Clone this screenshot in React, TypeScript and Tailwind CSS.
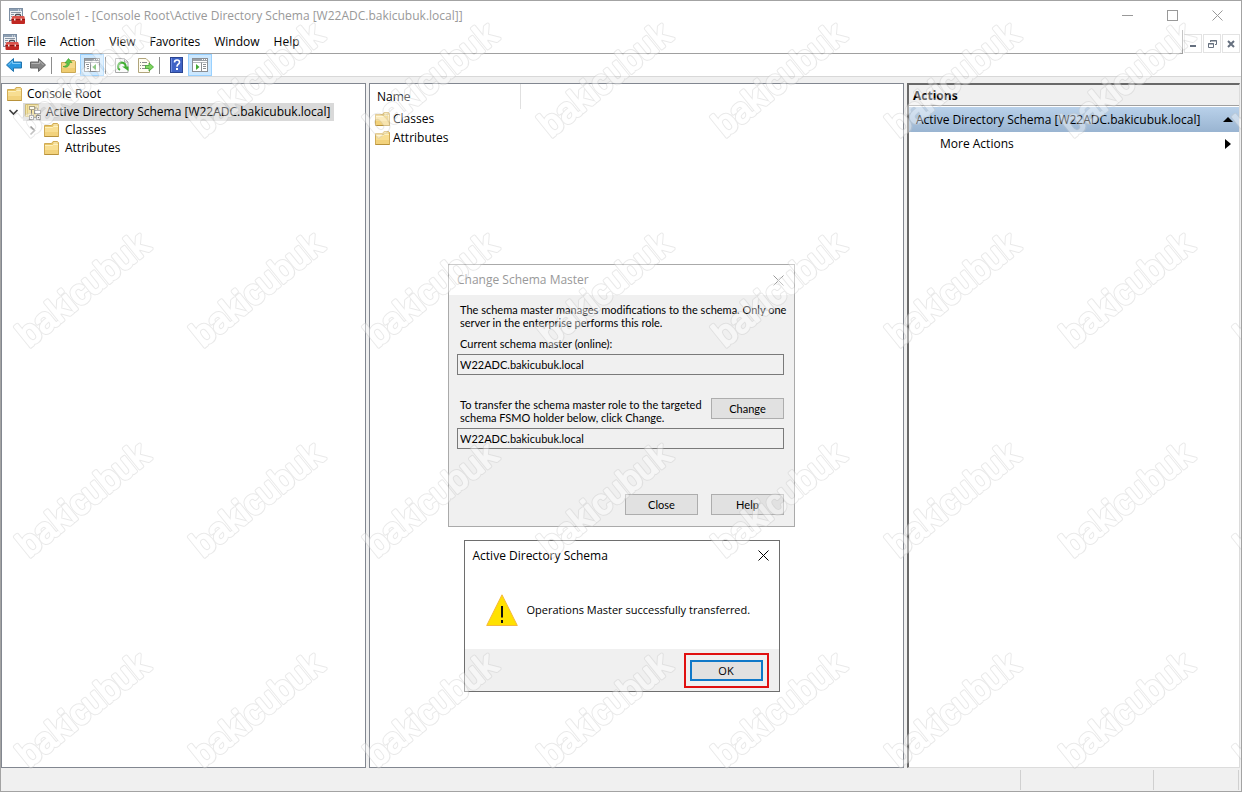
import { useState, type ReactNode } from "react";
import { clsx } from "clsx";

const SERVER = "W22ADC.bakicubuk.local";
const UI_FONT = "font-['Open_Sans','Noto_Sans',sans-serif]";
const DIALOG_FONT = "font-[Lato,'Liberation_Sans',sans-serif]";

const menus = ["File", "Action", "View", "Favorites", "Window", "Help"];
const schemaItems = ["Classes", "Attributes"];

function ConsoleIcon() {
  return (
    <svg width="16" height="16" viewBox="0 0 16 16" className="shrink-0" aria-hidden="true">
      <rect x="0.5" y="0.5" width="13" height="12" fill="#eef1f4" stroke="#7d8fa3" />
      <rect x="1" y="1" width="12" height="2" fill="#8ea0b4" />
      <path d="M9 2h1M11 2h1" stroke="#fff" />
      <path d="M2 4.500h10M2 6.500h3M2 8.500h1" stroke="#8794a3" />
      <path d="M6.500 9V7.500q0-1 1-1h3q1 0 1 1V9" fill="none" stroke="#4d4d55" strokeWidth="1.300" />
      <path d="M3 9q0-1 1-1h10.500q1 0 1 1l.5 2H2.500z" fill="#d9534c" />
      <path d="M2.500 11H16v4q0 1-1 1H3.500q-1 0-1-1z" fill="#c02823" />
      <path d="M2.500 11.500H16" stroke="#8e1512" />
      <path d="M5 10.500h1.500v2H5zM11.500 10.500H13v2h-1.500z" fill="#f4e9e4" />
    </svg>
  );
}

function FolderIcon() {
  return (
    <svg width="15" height="14" viewBox="0 0 15 14" className="shrink-0" aria-hidden="true">
      <path d="M.5 2.500h7l1.500-2h4.500l1 1v12H.5z" fill="#e9c667" stroke="#d0ab55" />
      <path d="M9.500 1.500h4v1h-4z" fill="#fff8dc" />
      <path d="M1 4h7.500l1-1H14v10H1z" fill="#f8de92" />
      <path d="M1 9h13v4H1z" fill="#f2d27c" />
      <path d="M1 4.500h7.500l1-1H14" fill="none" stroke="#fdf0be" />
      <path d="M.5 13.500h14" stroke="#b8923b" />
    </svg>
  );
}

function SchemaIcon() {
  return (
    <svg width="17" height="16" viewBox="0 0 17 16" className="shrink-0" aria-hidden="true">
      <path d="M.5.5H13.500v12H.5z" fill="#f3e3a6" stroke="#cdbb78" />
      <path d="M2.500 1v11" stroke="#e2cd80" />
      <rect x="4.500" y="2.500" width="5" height="3" fill="#fdfbf0" stroke="#a8a088" />
      <path d="M10 4h2.500v3M6.500 6v5M12.500 9v2" fill="none" stroke="#85817a" />
      <rect x="9.500" y="6.500" width="6" height="3" fill="#fff" stroke="#8c8c8c" />
      <rect x="4.500" y="11.500" width="4" height="4" fill="#f4f4f4" stroke="#7e7e7e" />
      <rect x="11.500" y="11.500" width="4" height="4" fill="#f4f4f4" stroke="#7e7e7e" />
      <path d="M6 13.500h1M13 13.500h1M9 13.500h2" stroke="#777" />
    </svg>
  );
}

function ArrowIcon({ forward = false }: { forward?: boolean }) {
  return (
    <svg width="16" height="14" viewBox="0 0 16 14" aria-hidden="true">
      {forward ? (
        <>
          <path d="M15.500 7 8.500.5V4h-8v6h8v3.500z" fill="#858585" stroke="#666" strokeLinejoin="round" />
          <path d="M1.500 5.500h8V3L13.500 7" fill="none" stroke="#b5b5b5" />
        </>
      ) : (
        <>
          <path d="M.5 7 7.500.5V4h8v6h-8v3.500z" fill="#2c9be3" stroke="#2274ad" strokeLinejoin="round" />
          <path d="M14.500 5.500h-8V3L2.500 7" fill="none" stroke="#84cdf8" />
        </>
      )}
    </svg>
  );
}

function UpFolderIcon() {
  return (
    <svg width="15" height="15" viewBox="0 0 15 15" aria-hidden="true">
      <path d="M.5 4.500h7l1.500-2h4.500l1 1v11H.5z" fill="#f5d98b" stroke="#cba955" />
      <path d="M1 10h13v4H1z" fill="#efcc70" />
      <path d="M2 8.500C5 8.500 6 7 6 5H4L7.500.5 11 4.500H8.500C8.500 8 6 10.500 2 8.500z" fill="#5cc348" stroke="#37982a" strokeWidth=".6" />
    </svg>
  );
}

function PaneIcon({ side }: { side: "left" | "right" }) {
  return (
    <svg width="16" height="14" viewBox="0 0 16 14" aria-hidden="true">
      <rect x="0.5" y="0.5" width="15" height="13" fill="#fff" stroke="#8b8f94" />
      <path d="M1 2h14" stroke="#9a9fa5" strokeWidth="2" />
      <path d="M10 1.500h1M12 1.500h1M14 1.500h1" stroke="#fff" />
      <path d="M1 4.500h14" stroke="#b4b8bc" />
      {side === "left" ? (
        <>
          <path d="M6.500 4.500V13" stroke="#8b8f94" />
          <path d="M2 6.500h3M3 8.500h2M3 10.500h2" stroke="#8b8f94" />
          <path d="M12 6v6L8.500 9z" fill="#42a832" />
        </>
      ) : (
        <>
          <path d="M9.500 4.500V13" stroke="#8b8f94" />
          <path d="M11 6.500h3M11 8.500h3M11 10.500h3" stroke="#8b8f94" />
          <path d="M4 6v6l3.500-3z" fill="#42a832" />
        </>
      )}
    </svg>
  );
}

function RefreshIcon() {
  return (
    <svg width="14" height="15" viewBox="0 0 14 15" aria-hidden="true">
      <path d="M.5.5h9l3.500 3.500v10.500H.5z" fill="#fbfbfb" stroke="#a9a9a9" />
      <path d="M9.500.5V4H13" fill="none" stroke="#a9a9a9" />
      <path d="M5 11.800A3.800 3.800 0 1 1 10.600 9" fill="none" stroke="#3fae30" strokeWidth="2" />
      <path d="M7 8.500h6.500V13z" fill="#3fae30" />
    </svg>
  );
}

function ExportIcon() {
  return (
    <svg width="16" height="15" viewBox="0 0 16 15" aria-hidden="true">
      <path d="M.5.5H8L11.500 4v10.500H.5z" fill="#fffdf0" stroke="#b1a57c" />
      <path d="M2 4.500h1M4 4.500h5M2 7.500h1M4 7.500h4M2 10.500h1M4 10.500h4" stroke="#8b8b8b" />
      <path d="M7.500 7.500H11V5l4.500 4L11 13v-2.500H7.500z" fill="#7fd45f" stroke="#3a9e2c" strokeWidth=".8" />
    </svg>
  );
}

function HelpIcon() {
  return (
    <svg width="13" height="16" viewBox="0 0 13 16" aria-hidden="true">
      <rect x="0.5" y="0.5" width="12" height="15" fill="#3f63c6" stroke="#2b4591" />
      <path d="M1.500 1v14" stroke="#6f8ee2" />
      <path d="M4.500 5.500Q4.500 3 7 3t2.500 2.200Q9.500 6.500 8 7.500 7 8.200 7 9.700" fill="none" stroke="#fff" strokeWidth="1.600" />
      <rect x="6" y="11" width="2" height="2" fill="#fff" />
    </svg>
  );
}

function CloseGlyph() {
  return (
    <svg width="11" height="11" viewBox="0 0 11 11" aria-hidden="true">
      <path d="M.5.5l10 10M10.500.5l-10 10" stroke="currentColor" fill="none" />
    </svg>
  );
}

function ToolButton({ label, active = false, children }: { label: string; active?: boolean; children: ReactNode }) {
  return (
    <button
      aria-label={label}
      aria-pressed={active}
      className={clsx(
        "flex h-[22px] w-6 items-center justify-center border",
        active ? "border-[#99d1ff] bg-[#cce8ff]" : "border-transparent hover:bg-[#e5f3ff]"
      )}
    >
      {children}
    </button>
  );
}

function ToolSeparator() {
  return (
    <div className="flex h-[17px] w-[6px] justify-start">
      <div className="ml-px w-px bg-[#8d8d8d]" />
    </div>
  );
}

function TitleBar() {
  return (
    <header className="flex h-[29px] items-center pl-2 pr-px text-[#999]">
      <ConsoleIcon />
      <h1 className="ml-[5px] flex-1 truncate">Console1 - [Console Root\Active Directory Schema [{SERVER}]]</h1>
      <button aria-label="Minimize" className="flex h-full w-[45px] items-center justify-center">
        <svg width="11" height="11" aria-hidden="true"><path d="M0 5.500h11" stroke="currentColor" /></svg>
      </button>
      <button aria-label="Maximize" className="flex h-full w-[45px] items-center justify-center">
        <svg width="11" height="11" aria-hidden="true"><rect x="0.5" y="0.5" width="10" height="10" fill="none" stroke="currentColor" /></svg>
      </button>
      <button aria-label="Close" className="flex h-full w-[45px] items-center justify-center">
        <CloseGlyph />
      </button>
    </header>
  );
}

function MenuBar() {
  return (
    <div className="flex h-6 items-stretch">
      <nav className="flex flex-1 items-center border-b border-[#a0a0a0] pl-[2px]">
        <ConsoleIcon />
        <div className="ml-px flex">
          {menus.map((menu) => (
            <button key={menu} className="px-[7px] hover:bg-[#e5f3ff]">{menu}</button>
          ))}
        </div>
      </nav>
      <div className="flex items-end gap-px border-l border-[#a0a0a0] pb-px pl-px pr-px text-[#66707f]">
        <button aria-label="Minimize child window" className="flex h-[19px] w-[18px] items-center justify-center border border-[#e3e3e3]">
          <svg width="9" height="9" aria-hidden="true"><path d="M1 7h6" stroke="currentColor" strokeWidth="2" /></svg>
        </button>
        <button aria-label="Restore child window" className="flex h-[19px] w-[18px] items-center justify-center border border-[#e3e3e3]">
          <svg width="9" height="8" aria-hidden="true">
            <path d="M2.500 2V.5h6v4H7M2 1h7M.5 3.500h5v4h-5zM0 4h6" fill="none" stroke="currentColor" />
          </svg>
        </button>
        <button aria-label="Close child window" className="flex h-[19px] w-[18px] items-center justify-center border border-[#e3e3e3]">
          <svg width="8" height="8" aria-hidden="true"><path d="M1 1l6 6M7 1l-6 6" stroke="currentColor" strokeWidth="2" /></svg>
        </button>
      </div>
    </div>
  );
}

function ToolBar() {
  return (
    <div className="flex h-[23px] items-center border-b border-[#d8d8d8] pl-px" role="toolbar">
      <ToolButton label="Back"><ArrowIcon /></ToolButton>
      <ToolButton label="Forward"><ArrowIcon forward /></ToolButton>
      <ToolSeparator />
      <ToolButton label="Up one level"><UpFolderIcon /></ToolButton>
      <ToolButton label="Show console tree" active><PaneIcon side="left" /></ToolButton>
      <ToolSeparator />
      <ToolButton label="Refresh"><RefreshIcon /></ToolButton>
      <ToolButton label="Export list"><ExportIcon /></ToolButton>
      <ToolSeparator />
      <ToolButton label="Help topics"><HelpIcon /></ToolButton>
      <ToolButton label="Show action pane" active><PaneIcon side="right" /></ToolButton>
    </div>
  );
}

function ConsoleTree() {
  const [open, setOpen] = useState(true);

  return (
    <aside className="w-[365px] border border-[#828790] bg-white pt-px">
      <ul className="leading-[18px]">
        <li className="flex h-[18px] items-center gap-[5px] pl-[5px]">
          <FolderIcon />
          Console Root
        </li>
        <li>
          <div className="flex h-[18px] items-center pl-[6px]">
            <button aria-label="Toggle schema" aria-expanded={open} className="w-[15px]" onClick={() => setOpen(!open)}>
              <svg width="11" height="7" aria-hidden="true" className={clsx(!open && "-rotate-90")}>
                <path d="M1.500 1l4 4 4-4" fill="none" stroke="#404040" strokeWidth="1.700" />
              </svg>
            </button>
            <span className="flex h-[18px] items-center gap-1 whitespace-nowrap bg-[#d9d9d9] pl-[2px] pr-1">
              <SchemaIcon />
              Active Directory Schema [{SERVER}]
            </span>
          </div>
          {open && (
            <ul>
              {schemaItems.map((item) => (
                <li key={item} className="flex h-[18px] items-center pl-[27px]">
                  <span className="w-[15px]">
                    {item === "Classes" && (
                      <svg width="7" height="11" aria-hidden="true">
                        <path d="M1.500 1.500l4 4-4 4" fill="none" stroke="#9a9a9a" strokeWidth="1.700" />
                      </svg>
                    )}
                  </span>
                  <FolderIcon />
                  <span className="ml-[6px]">{item}</span>
                </li>
              ))}
            </ul>
          )}
        </li>
      </ul>
    </aside>
  );
}

function ResultList() {
  return (
    <main className="min-w-0 flex-1 border border-[#828790] bg-white">
      <table className="w-[151px] text-left">
        <thead>
          <tr className="h-[25px]">
            <th className="border-r border-[#e0e0e0] pl-[7px] font-normal">Name</th>
          </tr>
        </thead>
        <tbody>
          {schemaItems.map((item) => (
            <tr key={item} className="h-[19px]">
              <td className="pl-[5px]">
                <div className="flex items-center gap-[3px] leading-[19px]">
                  <FolderIcon />
                  {item}
                </div>
              </td>
            </tr>
          ))}
        </tbody>
      </table>
    </main>
  );
}

function ActionsPane() {
  return (
    <aside className="w-[333px] border-l-2 border-t-2 border-r border-b border-l-[#696969] border-t-[#696969] border-r-[#dcdcdc] border-b-[#dcdcdc] bg-white">
      <h2 className="h-[21px] border-b border-[#a0a0a0] bg-[#f0f0f0] pl-1 font-bold leading-[22px]">Actions</h2>
      <button className="mt-px flex h-[25px] w-full items-center justify-between bg-linear-to-b from-[#b9d1ea] to-[#99b4d1] pl-[7px] pr-[6px]">
        Active Directory Schema [{SERVER}]
        <svg width="10" height="5" aria-hidden="true"><path d="M0 5l5-5 5 5z" /></svg>
      </button>
      <button className="flex h-6 w-full items-center justify-between pl-[31px] pr-2">
        More Actions
        <svg width="6" height="10" aria-hidden="true"><path d="M0 0l6 5-6 5z" /></svg>
      </button>
    </aside>
  );
}

function DialogButton({ children }: { children: ReactNode }) {
  return (
    <button className="h-[21px] w-[73px] shrink-0 border border-[#adadad] bg-[#e1e1e1] text-center">{children}</button>
  );
}

function SchemaMasterDialog() {
  return (
    <section
      role="dialog"
      aria-label="Change Schema Master"
      className="w-[347px] border border-[#aaa] bg-[#f0f0f0]"
    >
      <header className="flex h-[30px] items-center justify-between bg-white pl-2 pr-[10px] text-[#999]">
        <h2>Change Schema Master</h2>
        <button aria-label="Close dialog"><CloseGlyph /></button>
      </header>
      <div className={clsx("whitespace-nowrap pb-[11px] pl-2 pr-[10px] pt-2 text-[11px] leading-[13px]", DIALOG_FONT)}>
        <p className="pl-[3px]">
          The schema master manages modifications to the schema. Only one
          <br />
          server in the enterprise performs this role.
        </p>
        <label htmlFor="current-master" className="mt-2 block pl-[3px]">Current schema master (online):</label>
        <input
          id="current-master"
          readOnly
          value={SERVER}
          className="mt-1 block h-[21px] w-full border border-[#7a7a7a] bg-[#f0f0f0] px-[2px] pb-px"
        />
        <div className="mt-[23px] flex items-start justify-between">
          <label htmlFor="target-master" className="block pl-[3px]">
            To transfer the schema master role to the targeted
            <br />
            schema FSMO holder below, click Change.
          </label>
          <DialogButton>Change</DialogButton>
        </div>
        <input
          id="target-master"
          readOnly
          value={SERVER}
          className="mt-1 block h-[21px] w-full border border-[#7a7a7a] bg-[#f0f0f0] px-[2px] pb-px"
        />
        <div className="mt-[45px] flex justify-end gap-[13px]">
          <DialogButton>Close</DialogButton>
          <DialogButton>Help</DialogButton>
        </div>
      </div>
    </section>
  );
}

function TransferAlert() {
  return (
    <section role="alertdialog" aria-label="Active Directory Schema" className="w-[316px] border border-[#6e6e6e] bg-white">
      <header className="flex h-[29px] items-center justify-between pl-2 pr-[10px]">
        <h2>Active Directory Schema</h2>
        <button aria-label="Close alert"><CloseGlyph /></button>
      </header>
      <div className="flex h-[79px] items-center gap-[9px] pl-[21px]">
        <svg width="32" height="32" viewBox="0 0 32 32" aria-hidden="true">
          <path d="M16 .8 31.300 31.500H.7z" fill="#ffe100" stroke="#f5b83d" />
          <path d="M16 12v11.500M16 26v3" stroke="#111" strokeWidth="2" />
        </svg>
        <p className="text-[11px]">Operations Master successfully transferred.</p>
      </div>
      <footer className="flex justify-end bg-[#f0f0f0] pb-[3px] pr-[10px] pt-1">
        <div className="border-2 border-[#e01010] px-1 py-[5px]">
          <button className="block h-[21px] w-[73px] border-2 border-[#0f78c8] bg-[#e1e1e1] text-[11px] leading-[17px]">OK</button>
        </div>
      </footer>
    </section>
  );
}

function Watermark() {
  return (
    <svg className="pointer-events-none absolute inset-0 h-full w-full" aria-hidden="true">
      <defs>
        <pattern id="mark" width="174" height="210" y="-10" patternUnits="userSpaceOnUse">
          <g
            transform="translate(28 147) rotate(-39)"
            fontFamily="Liberation Sans"
            fontSize="35"
            strokeLinejoin="round"
            opacity="0.4"
          >
            <text fill="#c8c8c8" stroke="#c8c8c8" strokeWidth="4">bakicubuk</text>
            <text fill="#fff" stroke="#fff" strokeWidth="2">bakicubuk</text>
          </g>
        </pattern>
      </defs>
      <rect width="100%" height="100%" fill="url(#mark)" />
    </svg>
  );
}

export default function App() {
  return (
    <div className={clsx("relative flex min-h-screen flex-col overflow-hidden border border-[#a3a3a3] bg-white text-[12px] leading-4 text-black", UI_FONT)}>
      <TitleBar />
      <MenuBar />
      <ToolBar />
      <div className="flex flex-1 gap-[3px] bg-[#f0f0f0] pr-px pt-[6px]">
        <ConsoleTree />
        <ResultList />
        <ActionsPane />
      </div>
      <footer className="flex h-[23px] items-center justify-end bg-[#f0f0f0] pr-[2px]">
        <div className="h-5 w-[133px] border-l border-[#d0d0d0]" />
        <div className="h-5 w-[86px] border-l border-r border-[#d0d0d0]" />
      </footer>

      <div className="absolute inset-x-0 top-[263px] flex flex-col items-center gap-[13px] pl-px">
        <SchemaMasterDialog />
        <TransferAlert />
      </div>
      <Watermark />
    </div>
  );
}
